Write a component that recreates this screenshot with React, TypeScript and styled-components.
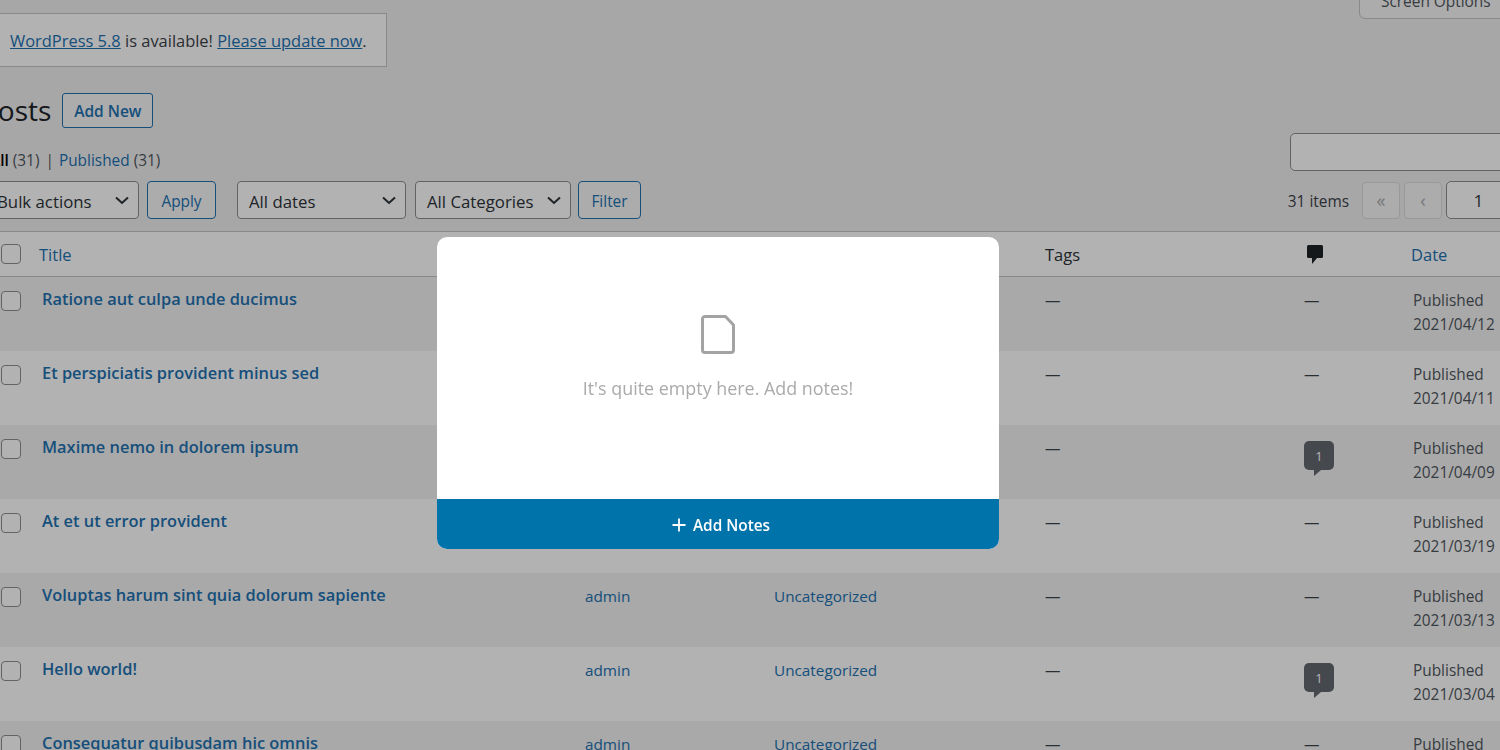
import React from "react";
import styled, { createGlobalStyle } from "styled-components";

const Global = createGlobalStyle`
  html, body {
    margin: 0;
    padding: 0;
    height: 100%;
    overflow: hidden;
    background: #f0f0f0;
  }
  body {
    font-family: "Open Sans", "Noto Sans", "Liberation Sans", sans-serif;
    font-size: 15.4px;
    color: #3c434a;
  }
`;

const posts = [
  { title: "Ratione aut culpa unde ducimus", date: "2021/04/12", comments: 0 },
  { title: "Et perspiciatis provident minus sed", date: "2021/04/11", comments: 0 },
  { title: "Maxime nemo in dolorem ipsum", date: "2021/04/09", comments: 1 },
  { title: "At et ut error provident", date: "2021/03/19", comments: 0 },
  { title: "Voluptas harum sint quia dolorum sapiente", date: "2021/03/13", comments: 0 },
  { title: "Hello world!", date: "2021/03/04", comments: 1 },
  { title: "Consequatur quibusdam hic omnis", date: "2021/03/01", comments: 0 },
];

function Chevron() {
  return (
    <ChevronSvg viewBox="0 0 16 16">
      <path d="M2 5.500 8 11l6-5.500" fill="none" stroke="#2c3338" strokeWidth="2" />
    </ChevronSvg>
  );
}

function Select({ label, width, cut }: { label: string; width: number; cut?: boolean }) {
  return (
    <SelectBox $width={width} $cut={cut}>
      <span>{label}</span>
      <Chevron />
    </SelectBox>
  );
}

export default function App() {
  return (
    <>
      <Global />
      <Page>
        <TopBar>
          <ScreenOptions>Screen Options</ScreenOptions>
        </TopBar>
        <Notice>
          <NoticeLink>WordPress 5.8</NoticeLink> is available! <NoticeLink>Please update now</NoticeLink>.
        </Notice>
        <HeaderBlock>
          <div>
            <HeadingRow>
              <Heading>Posts</Heading>
              <AddNew>Add New</AddNew>
            </HeadingRow>
            <Subsub>
              <strong>All</strong> <Count>(31)</Count> <Sep>|</Sep> <SubLink>Published</SubLink> <Count>(31)</Count>
            </Subsub>
          </div>
          <SearchInput />
        </HeaderBlock>
        <Toolbar>
          <Filters>
            <Select label="Bulk actions" width={159} cut />
            <OutlineButton $width={69}>Apply</OutlineButton>
            <FilterGap />
            <Select label="All dates" width={169} />
            <CategorySelect>
              <Select label="All Categories" width={156} />
            </CategorySelect>
            <FilterButton $width={63}>Filter</FilterButton>
          </Filters>
          <Pager>
            <Items>31 items</Items>
            <PageButton>«</PageButton>
            <PageButton>‹</PageButton>
            <PageInput>1</PageInput>
          </Pager>
        </Toolbar>
        <Table>
          <HeadRow>
            <CheckCell>
              <Check />
            </CheckCell>
            <HeadLink>Title</HeadLink>
            <HeadLink>Author</HeadLink>
            <HeadLink>Categories</HeadLink>
            <HeadText>Tags</HeadText>
            <CommentHead>
              <svg width="20" height="21" viewBox="0 0 20 21">
                <path
                  d="M3.500 1h13A1.500 1.500 0 0 1 18 2.500v10a1.500 1.500 0 0 1-1.500 1.500H12l-5 6v-6H3.500A1.500 1.500 0 0 1 2 12.500v-10A1.500 1.500 0 0 1 3.500 1z"
                  fill="#1d2327"
                />
              </svg>
            </CommentHead>
            <HeadLink>Date</HeadLink>
          </HeadRow>
          {posts.map((post, i) => (
            <Row key={post.title} $odd={i % 2 === 0}>
              <CheckCell>
                <Check />
              </CheckCell>
              <PostTitle>{post.title}</PostTitle>
              <CellLink>admin</CellLink>
              <CellLink>Uncategorized</CellLink>
              <Dash>—</Dash>
              {post.comments > 0 ? (
                <div>
                  <Bubble>{post.comments}</Bubble>
                </div>
              ) : (
                <Dash>—</Dash>
              )}
              <DateCell>
                Published
                <br />
                {post.date}
              </DateCell>
            </Row>
          ))}
        </Table>
      </Page>
      <Overlay>
        <Modal>
          <ModalBody>
            <svg width="36" height="41" viewBox="0 0 36 41">
              <path
                d="M5 2.500h20.500l8 8.500v25a2.500 2.500 0 0 1-2.500 2.500H5A2.500 2.500 0 0 1 2.500 36V5A2.500 2.500 0 0 1 5 2.500z"
                fill="none"
                stroke="#a3a3a3"
                strokeWidth="3"
                strokeLinejoin="round"
              />
            </svg>
            <EmptyText>It's quite empty here. Add notes!</EmptyText>
          </ModalBody>
          <AddNotes>
            <svg width="14" height="14" viewBox="0 0 14 14">
              <path d="M7 0.500v13M0.500 7h13" stroke="#fff" strokeWidth="1.800" />
            </svg>
            Add Notes
          </AddNotes>
        </Modal>
      </Overlay>
    </>
  );
}

const Page = styled.div`
  width: 1500px;
  height: 750px;
  overflow: hidden;
`;
const TopBar = styled.div`
  display: flex;
  justify-content: flex-end;
  height: 19px;
`;
const ScreenOptions = styled.div`
  width: 142px;
  height: 35px;
  margin-top: -16px;
  margin-right: -1px;
  box-sizing: border-box;
  padding: 6px 0 0 21px;
  background: #f6f6f6;
  border: 1px solid #c3c4c7;
  border-radius: 0 0 0 6px;
  font-size: 15.4px;
  white-space: nowrap;
  color: #50575e;
`;
const Notice = styled.div`
  width: 387px;
  height: 54px;
  box-sizing: border-box;
  margin: -6px 0 0 0;
  padding: 0 0 0 10px;
  display: flex;
  align-items: center;
  white-space: pre;
  background: #fff;
  border: 1px solid #c3c4c7;
  border-left: 0;
  font-size: 16.45px;
  color: #3c434a;
`;
const NoticeLink = styled.span`
  color: #2271b1;
  text-decoration: underline;
`;
const HeaderBlock = styled.div`
  display: flex;
  justify-content: space-between;
  align-items: flex-end;
  margin-top: 26px;
`;
const HeadingRow = styled.div`
  display: flex;
  align-items: center;
  margin-left: -19px;
  gap: 11px;
`;
const Heading = styled.h1`
  margin: 0;
  font-size: 28px;
  font-weight: 400;
  line-height: 35px;
  color: #1d2327;
`;
const AddNew = styled.div`
  width: 91px;
  height: 35px;
  box-sizing: border-box;
  display: flex;
  align-items: center;
  justify-content: center;
  border: 1px solid #2271b1;
  border-radius: 3px;
  background: #f6f6f6;
  color: #2271b1;
  font-weight: 600;
  font-size: 15.5px;
`;
const Subsub = styled.div`
  margin: 22px 0 0 -10px;
  height: 21px;
  line-height: 22px;
  white-space: pre;
  color: #50575e;
  strong {
    font-weight: 600;
    color: #000;
  }
`;
const Count = styled.span`
  color: #50575e;
`;
const Sep = styled.span`
  color: #50575e;
  margin: 0 1px 0 2px;
`;
const SubLink = styled.span`
  color: #2271b1;
`;
const SearchInput = styled.div`
  width: 230px;
  height: 38px;
  box-sizing: border-box;
  margin-right: -20px;
  background: #fff;
  border: 1px solid #8c8f94;
  border-radius: 5px;
`;
const Toolbar = styled.div`
  display: flex;
  justify-content: space-between;
  align-items: center;
  height: 38px;
  margin-top: 10px;
`;
const Filters = styled.div`
  display: flex;
  align-items: center;
  gap: 8px;
  margin-left: -20px;
`;
const FilterGap = styled.div`
  width: 5px;
`;
const CategorySelect = styled.div`
  margin-left: 1px;
`;
const SelectBox = styled.div<{ $width: number; $cut?: boolean }>`
  width: ${(p) => p.$width}px;
  height: 38px;
  box-sizing: border-box;
  display: flex;
  align-items: center;
  justify-content: space-between;
  padding: 0 8px 0 ${(p) => (p.$cut ? 16 : 11)}px;
  background: #fff;
  border: 1px solid #8c8f94;
  border-radius: 4px;
  font-size: 16.8px;
  color: #2c3338;
  white-space: nowrap;
  span {
    padding-top: 2px;
  }
`;
const ChevronSvg = styled.svg`
  width: 16px;
  height: 16px;
  flex: none;
`;
const OutlineButton = styled.div<{ $width: number }>`
  width: ${(p) => p.$width}px;
  height: 38px;
  box-sizing: border-box;
  padding-top: 2px;
  display: flex;
  align-items: center;
  justify-content: center;
  background: #f6f6f6;
  border: 1px solid #2271b1;
  border-radius: 4px;
  color: #2271b1;
`;
const FilterButton = styled(OutlineButton)`
  margin-left: -1px;
`;
const Pager = styled.div`
  display: flex;
  align-items: center;
  gap: 4px;
  margin-right: -30px;
`;
const Items = styled.span`
  margin-right: 9px;
  padding-top: 2px;
  color: #3c434a;
`;
const PageButton = styled.div`
  width: 38px;
  height: 37px;
  box-sizing: border-box;
  display: flex;
  align-items: center;
  justify-content: center;
  background: #f6f6f6;
  border: 1px solid #dcdcde;
  border-radius: 4px;
  color: #a7aaad;
  font-size: 18px;
`;
const PageInput = styled.div`
  width: 84px;
  height: 38px;
  box-sizing: border-box;
  padding: 1px 19px 0 0;
  display: flex;
  align-items: center;
  justify-content: center;
  background: #fff;
  border: 1px solid #8c8f94;
  border-radius: 5px;
  color: #2c3338;
  font-size: 16.5px;
`;
const Table = styled.div`
  margin-top: 12px;
  border-top: 1px solid #c3c4c7;
`;
const columns = "grid-template-columns: 39px 546px 189px 271px 259px 107px 1fr;";
const HeadRow = styled.div`
  display: grid;
  ${columns}
  height: 44px;
  align-items: center;
  background: #fff;
  border-bottom: 1px solid #c3c4c7;
`;
const Row = styled.div<{ $odd: boolean }>`
  display: grid;
  ${columns}
  height: 74px;
  box-sizing: border-box;
  padding-top: 12px;
  background: ${(p) => (p.$odd ? "#f2f2f2" : "#fff")};
  line-height: 24px;
`;
const CheckCell = styled.div`
  padding-left: 1px;
  display: flex;
  align-items: flex-start;
`;
const Check = styled.div`
  width: 20px;
  height: 20px;
  box-sizing: border-box;
  margin-top: 2px;
  background: #fff;
  border: 1px solid #8c8f94;
  border-radius: 4px;
  ${HeadRow} & {
    margin-top: 0;
  }
`;
const HeadLink = styled.div`
  color: #2271b1;
  font-size: 16.5px;
`;
const HeadText = styled.div`
  color: #2c3338;
  font-size: 16.5px;
`;
const CommentHead = styled.div`
  display: flex;
  padding-left: 1px;
`;
const PostTitle = styled.div`
  padding-left: 3px;
  margin-top: -2px;
  font-size: 16.4px;
  font-weight: 600;
  color: #2271b1;
`;
const CellLink = styled.div`
  margin-top: -1px;
  font-size: 15.3px;
  color: #2271b1;
`;
const Dash = styled.div`
  color: #3c434a;
`;
const Bubble = styled.span`
  position: relative;
  display: flex;
  align-items: center;
  justify-content: center;
  width: 30px;
  height: 29px;
  margin-top: 4px;
  background: #646970;
  border-radius: 5px;
  color: #fff;
  font-size: 13px;
  &::after {
    content: "";
    position: absolute;
    left: 10px;
    top: 100%;
    border-style: solid;
    border-width: 6px 7px 0 0;
    border-color: #646970 transparent transparent transparent;
  }
`;
const DateCell = styled.div`
  color: #50575e;
  padding-left: 2px;
  white-space: nowrap;
`;
const Overlay = styled.div`
  position: fixed;
  inset: 0;
  background: rgba(0, 0, 0, 0.3);
`;
const Modal = styled.div`
  position: absolute;
  left: 437px;
  top: 237px;
  width: 562px;
  height: 312px;
  display: flex;
  flex-direction: column;
  background: #fff;
  border-radius: 10px;
  overflow: hidden;
`;
const ModalBody = styled.div`
  flex: 1;
  display: flex;
  flex-direction: column;
  align-items: center;
  padding-top: 77px;
  gap: 21px;
`;
const EmptyText = styled.div`
  font-size: 17.9px;
  font-weight: 400;
  color: #aaaaaa;
`;
const AddNotes = styled.div`
  height: 50px;
  box-sizing: border-box;
  padding: 2px 0 0 6px;
  display: flex;
  align-items: center;
  justify-content: center;
  gap: 7px;
  background: #0073aa;
  color: #fff;
  font-size: 15.4px;
  font-weight: 600;
`;
